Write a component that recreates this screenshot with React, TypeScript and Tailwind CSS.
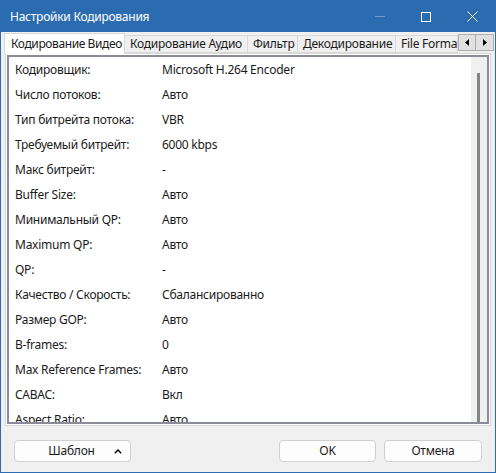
import React from "react";

const rows: [string, string][] = [
  ["Кодировщик:", "Microsoft H.264 Encoder"],
  ["Число потоков:", "Авто"],
  ["Тип битрейта потока:", "VBR"],
  ["Требуемый битрейт:", "6000 kbps"],
  ["Макс битрейт:", "-"],
  ["Buffer Size:", "Авто"],
  ["Минимальный QP:", "Авто"],
  ["Maximum QP:", "Авто"],
  ["QP:", "-"],
  ["Качество / Скорость:", "Сбалансированно"],
  ["Размер GOP:", "Авто"],
  ["B-frames:", "0"],
  ["Max Reference Frames:", "Авто"],
  ["CABAC:", "Вкл"],
  ["Aspect Ratio:", "Авто"],
];

const tabs = [
  { label: "Кодирование Аудио", w: "w-[123px]" },
  { label: "Фильтр", w: "w-[50px]" },
  { label: "Декодирование", w: "w-[98px]" },
  { label: "File Format", w: "w-[62px]" },
];

export default function App() {
  return (
    <div
      className="w-[496px] h-[473px] flex flex-col border border-[#2b6cb0] bg-[#f0f0f0] text-[12px] tracking-[-0.25px] text-[#1a1a1a] overflow-hidden"
      style={{ fontFamily: '"Noto Sans", "Segoe UI", sans-serif' }}
    >
      {/* title bar */}
      <div className="h-[31px] flex items-center bg-[#2b6cb0] text-white shrink-0">
        <span className="pl-[9px] flex-1 text-[12px]">Настройки Кодирования</span>
        <div className="flex items-center h-full">
          <div className="w-[46px] h-full flex items-center justify-center">
            <div className="w-[10px] h-px bg-[#6f9ccd]" />
          </div>
          <div className="w-[46px] h-full flex items-center justify-center">
            <div className="w-[10px] h-[10px] border border-white" />
          </div>
          <div className="w-[46px] h-full flex items-center justify-center">
            <svg width="11" height="11" viewBox="0 0 11 11">
              <path d="M0.5 0.5 L10.5 10.5 M10.5 0.5 L0.5 10.5" stroke="white" strokeWidth="1" />
            </svg>
          </div>
        </div>
      </div>

      {/* tab strip */}
      <div className="h-[21px] flex items-end pl-[3px] shrink-0 relative z-10">
        <div className="w-[121px] h-[21px] bg-white border border-b-0 border-[#d9d9d9] flex items-center pl-[6px] -mb-px relative whitespace-nowrap shrink-0 tracking-[-0.4px]">
          Кодирование Видео
        </div>
        {tabs.map((t) => (
          <div
            key={t.label}
            className={`${t.w} h-[18px] border border-l-0 border-[#d9d9d9] flex items-center px-[5px] overflow-hidden whitespace-nowrap shrink-0`}
          >
            {t.label}
          </div>
        ))}
        <div className="flex self-start mt-[2px] ml-0">
          <div className="w-[18px] h-[17px] border border-[#adadad] bg-[#e1e1e1] flex items-center justify-center">
            <svg width="4" height="7" viewBox="0 0 4 7">
              <path d="M4 0 L0 3.5 L4 7 Z" fill="black" />
            </svg>
          </div>
          <div className="w-[18px] h-[17px] border border-l-0 border-[#adadad] bg-[#e1e1e1] flex items-center justify-center">
            <svg width="4" height="7" viewBox="0 0 4 7">
              <path d="M0 0 L4 3.5 L0 7 Z" fill="black" />
            </svg>
          </div>
        </div>
      </div>

      {/* panel */}
      <div className="mx-[4px] h-[373px] bg-white border border-[#d9d9d9] p-px shrink-0">
        <div className="h-full border-2 border-[#8a8d99] flex overflow-hidden">
          <div className="flex-1 pl-[6px] overflow-hidden">
            {rows.map(([k, v]) => (
              <div key={k} className="h-[25px] flex items-center">
                <span className="w-[147px] shrink-0">{k}</span>
                <span>{v}</span>
              </div>
            ))}
          </div>
          <div className="w-[16px] bg-[#f0f0f0] relative shrink-0">
            <div className="absolute left-[6px] top-[16px] bottom-0 w-[3px] bg-[#858585]" />
          </div>
        </div>
      </div>

      {/* buttons */}
      <div className="flex items-center pl-[13px] pr-[13px] pt-[14px]">
        <button className="w-[117px] h-[22px] rounded-[4px] border border-[#d0d0d0] bg-[#fdfdfd] flex items-center relative">
          <span className="flex-1 text-center pr-[2px]">Шаблон</span>
          <svg className="absolute right-[8px] top-[8px]" width="8" height="5" viewBox="0 0 8 5">
            <path d="M0.8 4.2 L4 1 L7.2 4.2" stroke="black" strokeWidth="1.4" fill="none" />
          </svg>
        </button>
        <div className="flex-1" />
        <button className="w-[97px] h-[22px] rounded-[4px] border border-[#d0d0d0] bg-[#fdfdfd]">OK</button>
        <button className="w-[98px] h-[22px] ml-[8px] rounded-[4px] border border-[#d0d0d0] bg-[#fdfdfd]">Отмена</button>
      </div>
    </div>
  );
}
